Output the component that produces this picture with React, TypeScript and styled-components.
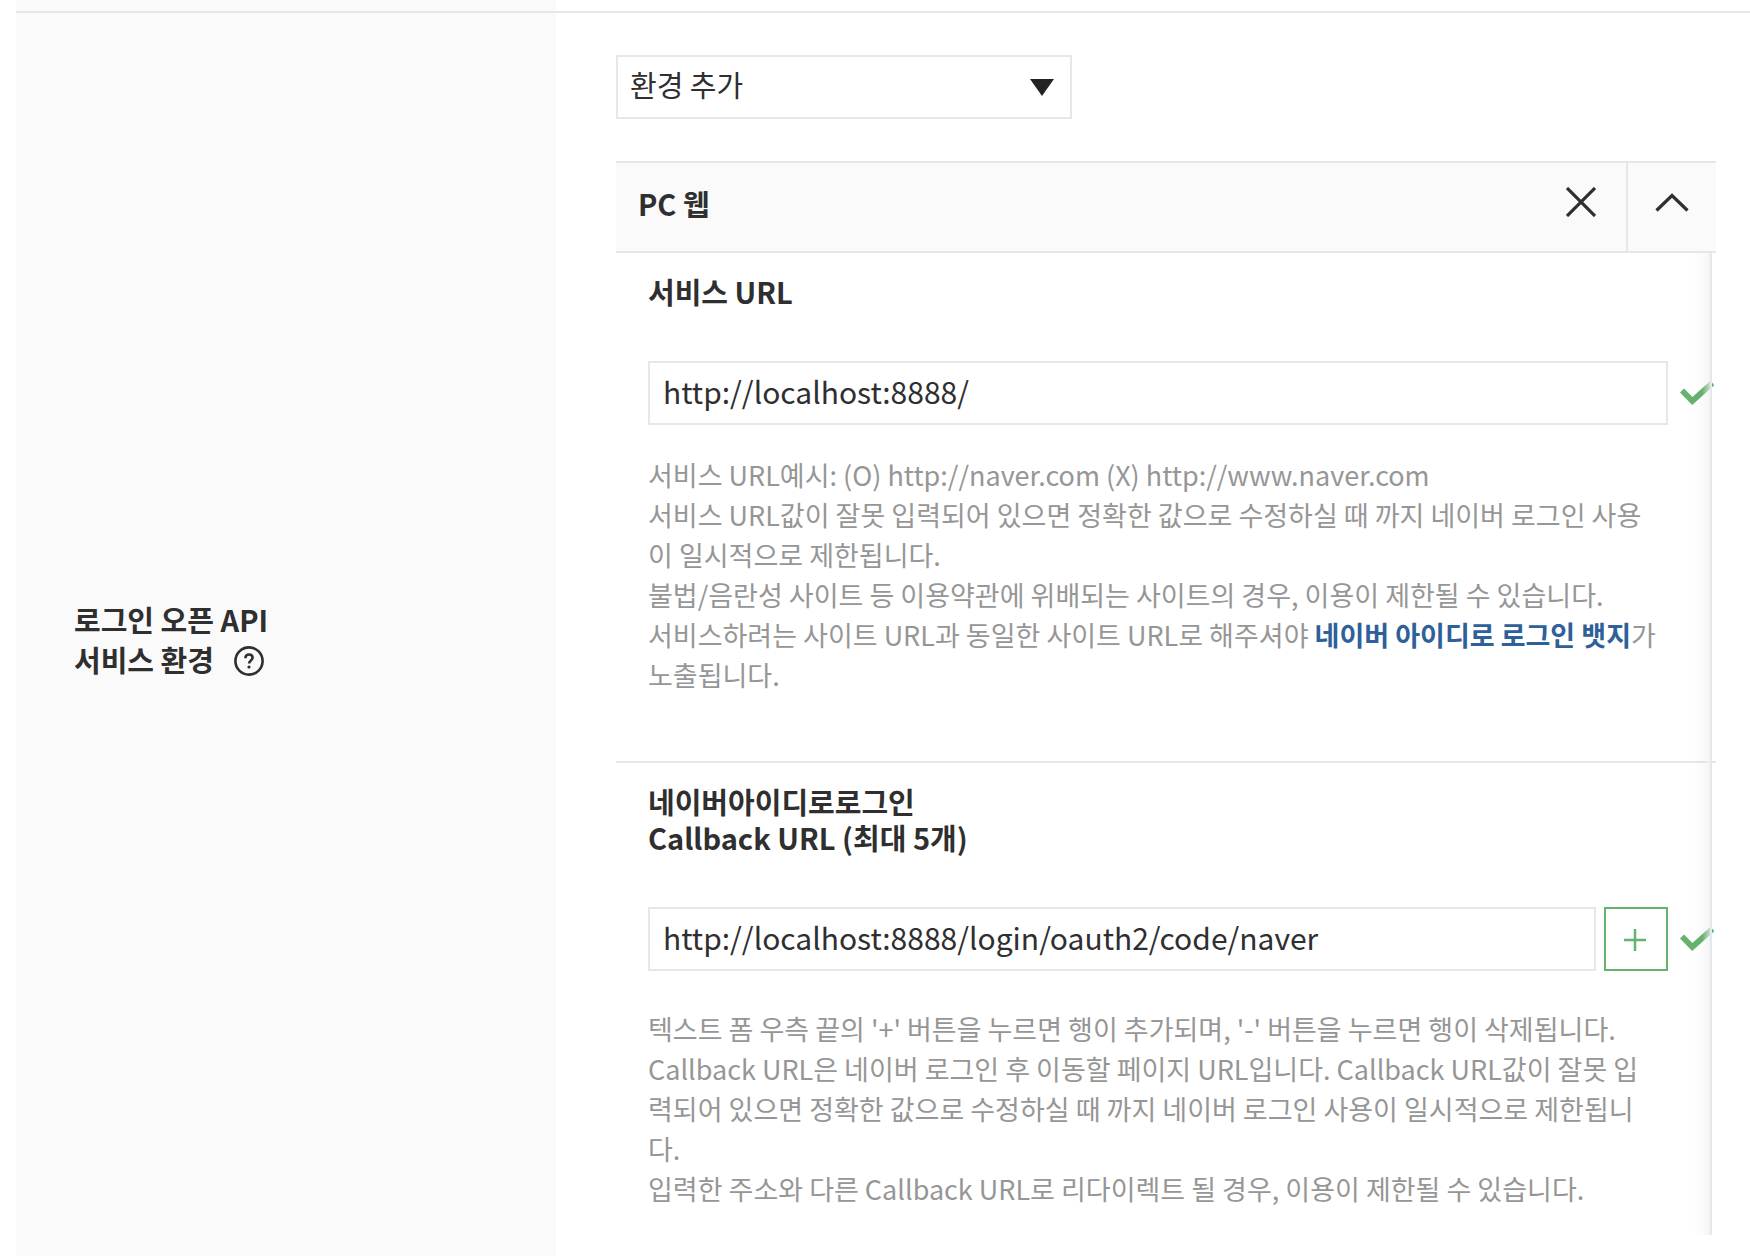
import React, { useState } from "react";
import styled, { createGlobalStyle } from "styled-components";

const line = "#e6e7e8";
const ink = "#2f2f2f";
const green = "#65b26f";

const GlobalStyle = createGlobalStyle`
  *, *::before, *::after { box-sizing: border-box; }
  body {
    margin: 0;
    background: #fff;
    color: ${ink};
    font-family: "Noto Sans CJK KR", sans-serif;
  }
  button, input, select { font: inherit; color: inherit; }
`;

const Page = styled.div`
  display: flex;
  flex-direction: column;
  min-height: 100vh;
  padding-left: 16px;
`;

const Row = styled.section<{ $grow?: boolean }>`
  display: grid;
  grid-template-columns: 540px minmax(0, 1fr);
  flex: ${(p) => (p.$grow ? "1 0 auto" : "0 0 11px")};
  border-top: ${(p) => (p.$grow ? `2px solid ${line}` : "0")};
`;

const Side = styled.div`
  display: flex;
  align-items: center;
  padding: 8px 58px 0;
  background: #fafafa;
`;

const SideTitle = styled.h2`
  margin: 0;
  font-size: 29px;
  line-height: 40px;
  font-weight: 700;
`;

const HelpButton = styled.button`
  display: inline-block;
  width: 30px;
  height: 30px;
  margin-left: 20px;
  padding: 0;
  border: 0;
  background: none;
  vertical-align: -4px;
  svg { display: block; }
`;

const Content = styled.div`
  padding: 42px 34px 20px 60px;
`;

const SelectBox = styled.div`
  position: relative;
  width: 456px;
  margin-bottom: 42px;
  svg {
    position: absolute;
    top: 24px;
    right: 18px;
    pointer-events: none;
  }
`;

const Select = styled.select`
  display: block;
  width: 100%;
  height: 64px;
  padding: 0 12px 6px;
  border: 2px solid ${line};
  border-radius: 0;
  background: #fff;
  appearance: none;
  font-size: 29px;
`;

const PanelHeader = styled.header`
  display: flex;
  align-items: stretch;
  height: 92px;
  border: solid ${line};
  border-width: 2px 0;
  background: #fafafa;
`;

const PanelTitle = styled.h3`
  flex: 1;
  margin: 0;
  padding: 0 22px;
  font-size: 29px;
  line-height: 80px;
  font-weight: 700;
`;

const HeaderButton = styled.button<{ $divided?: boolean }>`
  display: flex;
  align-items: center;
  justify-content: center;
  width: 90px;
  padding: 0 0 10px;
  border: 0;
  border-left: ${(p) => (p.$divided ? `2px solid ${line}` : "0")};
  background: none;
`;

const PanelBody = styled.div`
  position: relative;
  &::after {
    content: "";
    position: absolute;
    top: 0;
    bottom: 0;
    right: 4px;
    width: 18px;
    border-right: 2px solid ${line};
    background: linear-gradient(
      to right,
      rgba(0, 0, 0, 0.005),
      rgba(0, 0, 0, 0.015) 50%,
      rgba(240, 240, 240, 0.7)
    );
    pointer-events: none;
  }
`;

const Field = styled.div<{ $last?: boolean }>`
  padding: 20px 2px ${(p) => (p.$last ? "26px" : "66px")} 32px;
  border-bottom: ${(p) => (p.$last ? "0" : `2px solid ${line}`)};
`;

const FieldLabel = styled.label`
  display: block;
  margin-bottom: 52px;
  font-size: 29px;
  line-height: 36px;
  font-weight: 700;
`;

const InputRow = styled.div`
  display: flex;
  align-items: center;
`;

const TextInput = styled.input`
  flex: 1;
  min-width: 0;
  height: 64px;
  padding: 0 13px 4px;
  border: 2px solid ${line};
  border-radius: 0;
  background: #fff;
  font-size: 30px;
`;

const AddButton = styled.button`
  display: flex;
  align-items: center;
  justify-content: center;
  width: 64px;
  height: 64px;
  margin-left: 8px;
  padding: 2px 2px 0 0;
  border: 2px solid ${green};
  background: #fff;
`;

const Check = styled.svg`
  flex: none;
  margin-left: 12px;
`;

const Description = styled.p<{ $spaced?: boolean }>`
  margin: ${(p) => (p.$spaced ? "38px" : "30px")} 56px 0 0;
  color: #969696;
  font-size: 27px;
  line-height: 40px;
`;

const BadgeLink = styled.a`
  color: #2e6099;
  font-weight: 700;
  text-decoration: none;
`;

const CheckMark = () => (
  <Check width="34" height="24" viewBox="0 0 34 24" aria-hidden="true">
    <path d="M2 9.5 12.3 20 32.5 2" fill="none" stroke={green} strokeWidth="5.8" />
  </Check>
);

export default function App() {
  const [serviceUrl, setServiceUrl] = useState("http://localhost:8888/");
  const [callbackUrl, setCallbackUrl] = useState("http://localhost:8888/login/oauth2/code/naver");

  return (
    <>
      <GlobalStyle />
      <Page>
        <Row>
          <Side />
        </Row>
        <Row $grow>
          <Side>
            <SideTitle>
              로그인 오픈 API
              <br />
              서비스 환경
              <HelpButton type="button" aria-label="도움말">
                <svg width="30" height="30" viewBox="0 0 30 30" fill="none" stroke={ink}>
                  <circle cx="15" cy="15" r="13.6" strokeWidth="2.6" />
                  <path d="M11.4 12.2c0-2.4 1.5-3.7 3.6-3.7s3.6 1.3 3.6 3.3c0 2.6-3.5 2.7-3.5 5.6" strokeWidth="2.6" />
                  <circle cx="15" cy="21" r="1.6" fill={ink} stroke="none" />
                </svg>
              </HelpButton>
            </SideTitle>
          </Side>
          <Content>
            <SelectBox>
              <Select aria-label="환경 추가">
                <option>환경 추가</option>
              </Select>
              <svg width="24" height="17" viewBox="0 0 24 17" aria-hidden="true">
                <path d="M0 0h24L12 17z" fill="#232323" />
              </svg>
            </SelectBox>
            <PanelHeader>
              <PanelTitle>PC 웹</PanelTitle>
              <HeaderButton type="button" aria-label="삭제">
                <svg width="30" height="30" viewBox="0 0 30 30" fill="none" stroke={ink} strokeWidth="3.2">
                  <path d="M1 1l28 28M29 1L1 29" />
                </svg>
              </HeaderButton>
              <HeaderButton type="button" $divided aria-label="접기">
                <svg width="34" height="19" viewBox="0 0 34 19" fill="none" stroke={ink} strokeWidth="3.2">
                  <path d="M1.5 17.5 17 2.5l15.5 15" />
                </svg>
              </HeaderButton>
            </PanelHeader>
            <PanelBody>
              <Field>
                <FieldLabel htmlFor="service-url">서비스 URL</FieldLabel>
                <InputRow>
                  <TextInput id="service-url" value={serviceUrl} onChange={(e) => setServiceUrl(e.target.value)} />
                  <CheckMark />
                </InputRow>
                <Description>
                  서비스 URL예시: (O) http://naver.com (X) http://www.naver.com
                  <br />
                  서비스 URL값이 잘못 입력되어 있으면 정확한 값으로 수정하실 때 까지 네이버 로그인 사용이 일시적으로
                  제한됩니다.
                  <br />
                  불법/음란성 사이트 등 이용약관에 위배되는 사이트의 경우, 이용이 제한될 수 있습니다.
                  <br />
                  서비스하려는 사이트 URL과 동일한 사이트 URL로 해주셔야{" "}
                  <BadgeLink href="#badge">네이버 아이디로 로그인 뱃지</BadgeLink>가 노출됩니다.
                </Description>
              </Field>
              <Field $last>
                <FieldLabel htmlFor="callback-url">
                  네이버아이디로로그인
                  <br />
                  Callback URL (최대 5개)
                </FieldLabel>
                <InputRow>
                  <TextInput id="callback-url" value={callbackUrl} onChange={(e) => setCallbackUrl(e.target.value)} />
                  <AddButton type="button" aria-label="추가">
                    <svg width="24" height="24" viewBox="0 0 24 24" stroke={green} strokeWidth="2.5">
                      <path d="M12 1v22M1 12h22" />
                    </svg>
                  </AddButton>
                  <CheckMark />
                </InputRow>
                <Description $spaced>
                  텍스트 폼 우측 끝의 '+' 버튼을 누르면 행이 추가되며, '-' 버튼을 누르면 행이 삭제됩니다.
                  <br />
                  Callback URL은 네이버 로그인 후 이동할 페이지 URL입니다. Callback URL값이 잘못 입력되어 있으면 정확한
                  값으로 수정하실 때 까지 네이버 로그인 사용이 일시적으로 제한됩니다.
                  <br />
                  입력한 주소와 다른 Callback URL로 리다이렉트 될 경우, 이용이 제한될 수 있습니다.
                </Description>
              </Field>
            </PanelBody>
          </Content>
        </Row>
      </Page>
    </>
  );
}
